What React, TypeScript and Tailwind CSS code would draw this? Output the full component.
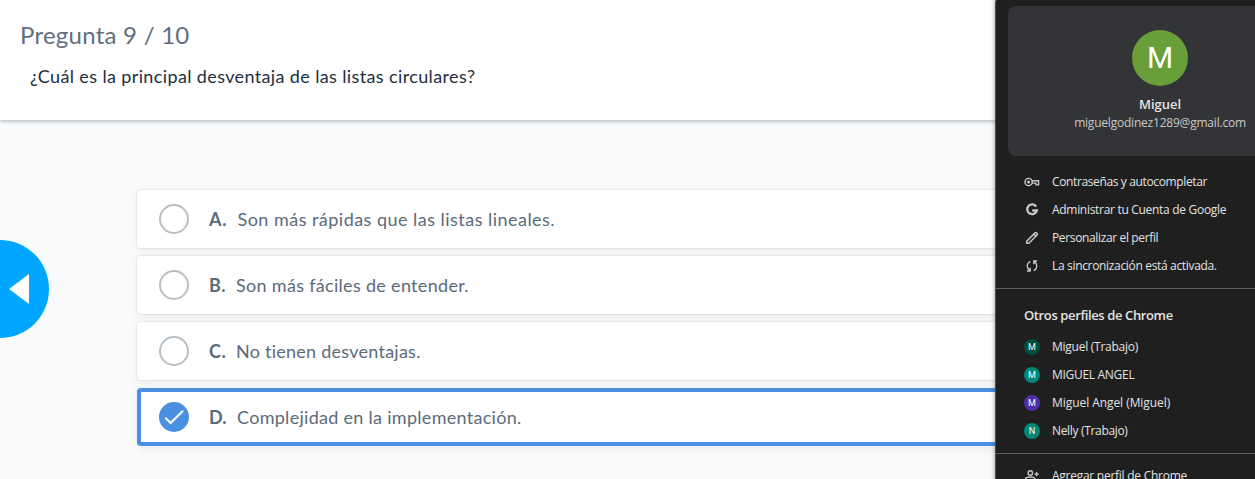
import React from "react";

type Option = { letter: string; text: string; track: string; letterWidth: string; selected?: boolean };

const options: Option[] = [
  { letter: "A.", text: "Son más rápidas que las listas lineales.", track: "tracking-[0.47px]", letterWidth: "w-[28.5px] tracking-[0.8px]" },
  { letter: "B.", text: "Son más fáciles de entender.", track: "tracking-[0.31px]", letterWidth: "w-[27px] tracking-[0.5px]" },
  { letter: "C.", text: "No tienen desventajas.", track: "tracking-[0.25px]", letterWidth: "w-[27px] tracking-[0.5px]" },
  { letter: "D.", text: "Complejidad en la implementación.", track: "tracking-[0.29px]", letterWidth: "w-[28px]", selected: true },
];

const profiles = [
  { initial: "M", name: "Miguel (Trabajo)", color: "bg-[#004d40]", track: "tracking-[-0.26px]" },
  { initial: "M", name: "MIGUEL ANGEL", color: "bg-[#00897b]", track: "tracking-[-0.3px]" },
  { initial: "M", name: "Miguel Angel (Miguel)", color: "bg-[#512da8]", track: "tracking-[-0.06px]" },
  { initial: "N", name: "Nelly (Trabajo)", color: "bg-[#00897b]", track: "tracking-[-0.33px]" },
];

const KeyIcon = () => (
  <svg viewBox="0 0 16 16" className="h-4 w-4 overflow-visible" fill="none" stroke="#c7c7c7" strokeWidth="1.4">
    <circle cx="4.6" cy="8" r="3.6" />
    <circle cx="4.6" cy="8" r="1.5" fill="#c7c7c7" stroke="none" />
    <path d="M8 6.7h6.6v4.2h-2.7V9.1H8" />
  </svg>
);

const GoogleIcon = () => (
  <svg viewBox="0 0 16 16" className="h-4 w-4" fill="none" stroke="#c7c7c7" strokeWidth="2.3">
    <path d="M12.2 4.5A4.9 4.9 0 1 0 12.9 8.5H8.3" />
  </svg>
);

const PencilIcon = () => (
  <svg viewBox="0 0 16 16" className="h-4 w-4" fill="none" stroke="#c7c7c7" strokeWidth="1.5" strokeLinejoin="round">
    <path d="M2.7 13.3v-2.1L11 2.9a1 1 0 0 1 1.4 0l.7.7a1 1 0 0 1 0 1.4L4.8 13.3zM9.8 4.1l2.1 2.1" />
  </svg>
);

const SyncIcon = () => (
  <svg viewBox="0 0 16 16" className="h-4 w-4" fill="none" stroke="#c7c7c7" strokeWidth="1.4">
    <path d="M6.3 3.5A4.8 4.8 0 0 0 5 11.7L6 12.7M6.2 9.7v3.3H2.9M9.7 12.5A4.8 4.8 0 0 0 11 4.3L10 3.3M9.8 6.3V3h3.3" />
  </svg>
);

const AddPersonIcon = () => (
  <svg viewBox="0 0 16 16" className="h-4 w-4" fill="none" stroke="#c7c7c7" strokeWidth="1.4">
    <circle cx="6.3" cy="5" r="2.2" />
    <path d="M1.5 12.7v-1.4c0-1.5 2.4-2.3 4.8-2.3s4.8.8 4.8 2.3v1.4zM12.6 3.9v4.4M10.4 6.1h4.4" />
  </svg>
);

const actions = [
  { icon: KeyIcon, label: "Contraseñas y autocompletar", track: "tracking-[-0.37px]" },
  { icon: GoogleIcon, label: "Administrar tu Cuenta de Google", track: "tracking-[-0.3px]" },
  { icon: PencilIcon, label: "Personalizar el perfil", track: "tracking-[-0.36px]" },
  { icon: SyncIcon, label: "La sincronización está activada.", track: "tracking-[-0.33px]" },
];

function OptionCard({ option }: { option: Option }) {
  return (
    <div
      className={
        option.selected
          ? "flex h-[58px] items-center rounded-[4px] border-4 border-[#4a90e2] bg-white pl-[18px] shadow-[0_2px_10px_rgba(0,0,0,0.08)]"
          : "flex h-[58px] items-center rounded-[4px] bg-white pl-[22px] shadow-[0_0_2px_rgba(0,0,0,0.18),0_2px_10px_rgba(0,0,0,0.06)]"
      }
    >
      {option.selected ? (
        <span className="flex size-[30px] shrink-0 items-center justify-center rounded-full bg-[#4a90e2]">
          <svg viewBox="0 0 30 30" className="size-[30px]" fill="none" stroke="white" strokeWidth="2">
            <path d="M6.3 15.8l5.3 5.2L24 8.8" />
          </svg>
        </span>
      ) : (
        <span className="size-[30px] shrink-0 rounded-full border-2 border-[#b8c0c7]" />
      )}
      <div className="flex pl-5 text-[18px] leading-6 whitespace-nowrap text-[#5b6b79]">
        <b className={option.letterWidth}>{option.letter}</b>
        <span className={option.track}>{option.text}</span>
      </div>
    </div>
  );
}

export default function App() {
  return (
    <div className="relative flex h-[479px] w-[1255px] flex-col overflow-hidden bg-[#f8fafc] font-['Lato',sans-serif]">
      <header className="z-10 h-[120px] shrink-0 bg-white pt-[19px] pl-5 shadow-[0_1px_4px_rgba(50,65,80,0.4)]">
        <h1 className="text-[24px] leading-8 tracking-[0.25px] whitespace-nowrap text-[#5f6f7d]">
          <span>Pregunta 9 / 10</span>
        </h1>
        <p className="mt-[13px] pl-[10px] text-[18px] leading-6 tracking-[0.37px] whitespace-nowrap text-[#1d3040]">
          <span>¿Cuál es la principal desventaja de las listas circulares?</span>
        </p>
      </header>
      <main className="flex flex-1">
        <div className="w-[137px] shrink-0 pt-[120px]">
          <button aria-label="Anterior" className="flex h-[98px] w-[49px] items-center rounded-r-full bg-[#00a6ff] pl-[9px]">
            <svg viewBox="0 0 20 30" className="h-[30px] w-5" fill="white">
              <path d="M0 15L20 0v30z" />
            </svg>
          </button>
        </div>
        <div className="flex flex-1 flex-col gap-2 pt-[70px]">
          {options.map((o) => (
            <OptionCard key={o.letter} option={o} />
          ))}
        </div>
      </main>
      <aside className="absolute -top-[5px] left-[995px] z-20 h-[500px] w-[330px] rounded-[8px] border border-[#4c4c4c] bg-[#1f1f1f] pt-[10px] font-['Open_Sans',sans-serif] text-[12px] text-[#e3e3e3] shadow-[0_0_5px_rgba(0,0,0,0.4)]">
        <section className="ml-3 flex h-[150px] w-[304px] flex-col items-center rounded-[8px] bg-[#333438] pt-6">
          <div className="flex size-14 items-center justify-center rounded-full bg-[#689f38] font-['Roboto'] text-[30px] leading-none text-white">M</div>
          <div className="mt-[9px] text-[13px] leading-[18px] font-semibold"><span>Miguel</span></div>
          <div className="mt-px text-[12px] leading-[18px] tracking-[-0.21px] text-[#c7c7c7]"><span>miguelgodinez1289@gmail.com</span></div>
        </section>
        <ul className="mt-3 pl-7">
          {actions.map(({ icon: Icon, label, track }) => (
            <li key={label} className="flex h-7 items-center gap-3 whitespace-nowrap">
              <Icon />
              <span className={track}>{label}</span>
            </li>
          ))}
        </ul>
        <div className="mt-2 h-px bg-[#5e5e5e]" />
        <h2 className="mt-[17px] pl-7 text-[13px] leading-[18px] font-semibold tracking-[-0.38px]"><span>Otros perfiles de Chrome</span></h2>
        <ul className="mt-[9px] pl-7">
          {profiles.map((p) => (
            <li key={p.name} className="flex h-7 items-center gap-3 whitespace-nowrap">
              <span className={`flex size-4 items-center justify-center rounded-full font-['Roboto'] text-[9px] leading-none text-white ${p.color}`}>{p.initial}</span>
              <span className={p.track}>{p.name}</span>
            </li>
          ))}
        </ul>
        <div className="mt-2 h-px bg-[#5e5e5e]" />
        <div className="mt-2 flex h-7 items-center gap-3 pl-7 whitespace-nowrap">
          <AddPersonIcon />
          <span className="tracking-[-0.26px]">Agregar perfil de Chrome</span>
        </div>
      </aside>
    </div>
  );
}
